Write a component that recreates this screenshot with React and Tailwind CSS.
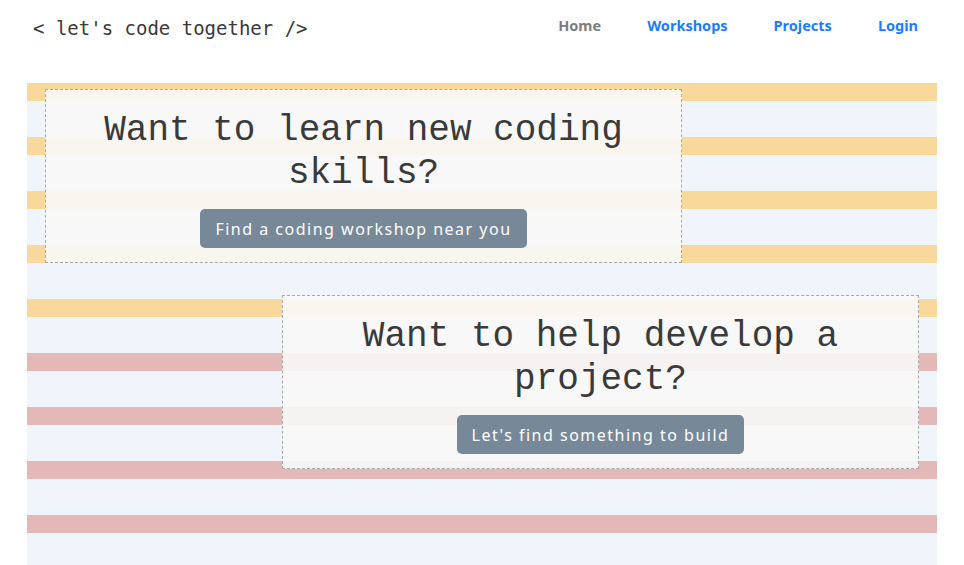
const links = [
  { label: "Home", active: true },
  { label: "Workshops" },
  { label: "Projects" },
  { label: "Login" },
];

const hand = "font-['Comic_Sans_MS','Noto_Sans',sans-serif]";

function Card({ title, action, className }) {
  return (
    <div
      className={`w-[70%] border border-dashed border-[#a9a9a9] bg-[#f8f8f8]/90 pt-[19px] pb-[14px] text-center ${className}`}
    >
      <h2 className="mx-auto max-w-[560px] font-['Liberation_Mono','Courier_New',monospace] text-[36px] leading-[43px] text-[#3a3a3a]">
        {title}
      </h2>
      <button
        className={`mt-[14px] h-[39px] rounded-[5px] bg-[#778899] px-[15px] text-[16px] tracking-[1.5px] text-white ${hand}`}
      >
        {action}
      </button>
    </div>
  );
}

export default function App() {
  return (
    <div className="min-h-screen bg-white">
      <header className="flex h-[54px] items-center justify-between pl-[33px] pr-[46px]">
        <div className="pt-[2px] font-['DejaVu_Sans_Mono',monospace] text-[19px] text-[#3a3a3a]">
          &lt; let's code together /&gt;
        </div>
        <nav className={`flex items-center gap-[46px] pb-[3px] text-[14.5px] font-bold ${hand}`}>
          {links.map((l) => (
            <a
              key={l.label}
              href="#"
              className={l.active ? "text-[#7d7d7d]" : "text-[#1a7dff]"}
            >
              {l.label}
            </a>
          ))}
        </nav>
      </header>

      <main className="mx-[27px] mt-[29px] flex flex-col gap-8 pt-[6px] pb-[120px] [background:repeating-linear-gradient(#f9d89b_0_18px,#eff5fa_18px_54px)_top/100%_270px_no-repeat,repeating-linear-gradient(#e5b8b8_0_18px,#eff5fa_18px_54px)]">
        <Card
          className="ml-[18px]"
          title="Want to learn new coding skills?"
          action="Find a coding workshop near you"
        />
        <Card
          className="ml-auto mr-[18px]"
          title="Want to help develop a project?"
          action="Let's find something to build"
        />
      </main>
    </div>
  );
}
